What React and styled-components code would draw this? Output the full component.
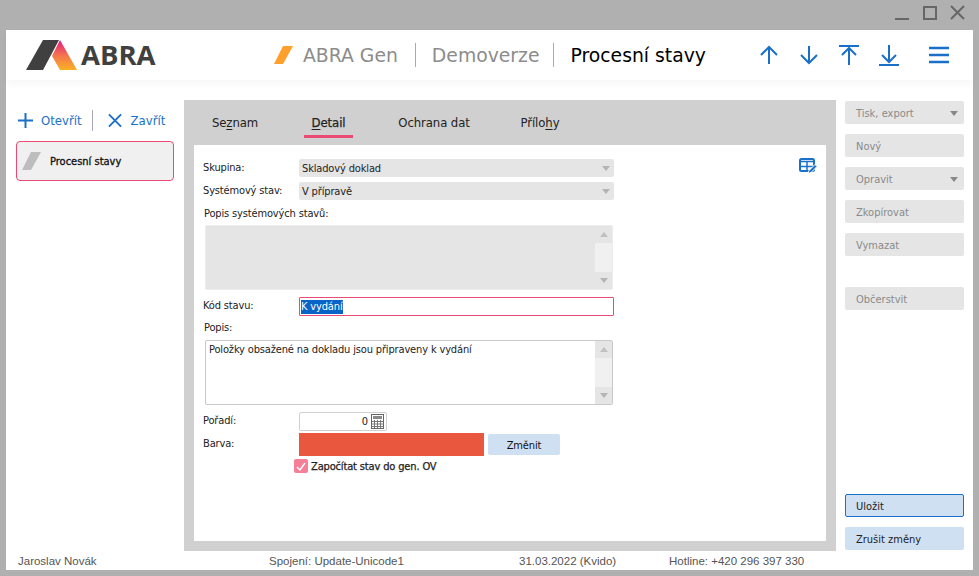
import React from "react";
import styled, { createGlobalStyle } from "styled-components";

const Global = createGlobalStyle`
  html, body { margin: 0; padding: 0; height: 100%; background: #b0b0b0; overflow: hidden; }
  body { font-family: "DejaVu Sans", "Liberation Sans", sans-serif; font-stretch: condensed; }
  * { box-sizing: border-box; }
`;

const Windowed = styled.div`
  width: 979px; height: 576px; background: #b0b0b0; display: flex; flex-direction: column;
`;
const TitleBar = styled.div`
  height: 30px; display: flex; justify-content: flex-end; align-items: flex-start; padding: 5px 12px 0 0; gap: 10px;
`;
const WinIcon = styled.svg`
  width: 18px; height: 18px; fill: none; stroke: #666; stroke-width: 2;
`;
const Shell = styled.div`
  width: 967px; height: 540px; margin-left: 6px; background: #fff; display: flex; flex-direction: column;
`;
const Header = styled.header`
  height: 50px; display: flex; align-items: center; flex: none; box-shadow: 0 4px 8px rgba(0,0,0,.035);
`;
const LogoBox = styled.div`
  display: flex; align-items: center; width: 268px; padding-left: 20px; gap: 3px;
`;
const LogoWord = styled.span`
  font: 700 27.5px/30px "Open Sans", sans-serif; font-stretch: normal; color: #404040;
`;
const Crumbs = styled.div`
  display: flex; align-items: center; flex: 1;
`;
const Crumb = styled.span`
  font-stretch: normal;
  font-size: 18.8px; line-height: 24px; height: 24px; color: ${p => p.$active ? "#000" : "#8c8c8c"};
  padding: 1px ${p => p.$pr || 0}px 0 ${p => p.$first ? 0 : 16}px;
  border-right: ${p => p.$active ? "none" : "1px solid #a8a8b8"};
`;
const Swash = styled.svg`
  width: 20px; height: 18px; margin-right: 9px; flex: none;
`;
const NavIcons = styled.div`
  display: flex; align-items: center; gap: 20px; padding-right: 24px;
`;
const NavIcon = styled.svg`
  width: 20px; height: 22px; fill: none; stroke: #1a6fc9; stroke-width: 2;
`;
const Burger = styled(NavIcon)`
  margin-left: 10px;
`;
const Body = styled.div`
  flex: 1; display: flex; padding-top: 20px; min-height: 0;
`;
const Side = styled.aside`
  width: 178px; flex: none; padding: 0 10px; display: flex; flex-direction: column;
`;
const SideTools = styled.div`
  display: flex; align-items: center; height: 41px; padding-left: 2px;
`;
const SideAction = styled.span`
  display: flex; align-items: center; gap: ${p => p.$gap}px; font-size: 13px; color: #1a6fc9;
`;
const SideSep = styled.span`
  width: 1px; height: 21px; background: #a8a8b8; margin: 0 15px 0 10px;
`;
const ActionIcon = styled.svg`
  width: ${p => p.$w || 15}px; height: 15px; fill: none; stroke: #1a6fc9; stroke-width: 2;
`;
const ModuleCard = styled.div`
  height: 40px; border: 1px solid #ea4b72; border-radius: 4px; background: #f0f0f0;
  display: flex; align-items: center; padding-left: 5px; gap: 8px;
  font-size: 11px; color: #111; -webkit-text-stroke: .3px #111;
`;
const Center = styled.main`
  width: 652px; flex: none; background: #d0d0d0; padding: 0 10px 10px; display: flex; flex-direction: column;
`;
const Tabs = styled.nav`
  height: 45px; flex: none; display: flex; padding-left: ${p => p.$pl}px;
`;
const Tab = styled.div`
  height: 38px; width: ${p => p.$w}px; margin-right: ${p => p.$gap}px; padding-top: 14px; text-align: center;
  font-size: 13px; line-height: 17px; color: #222; letter-spacing: -.1px;
  border-bottom: ${p => p.$active ? "3px solid #ea4b72" : "none"};
  -webkit-text-stroke: ${p => p.$active ? ".25px #222" : "0"};
  u { text-underline-offset: 2px; }
`;
const Panel = styled.section`
  flex: 1; background: #fff; padding: 14px 0 0 9px; position: relative; font-size: 11px; color: #222; letter-spacing: -.15px;
`;
const Row = styled.div`
  display: flex; align-items: center; height: ${p => p.$h || 18}px;
  margin-top: ${p => p.$mt || 0}px; margin-bottom: ${p => p.$mb || 0}px; width: 411px;
`;
const Label = styled.label`
  width: 96px; flex: none; line-height: 14px; position: relative; top: ${p => p.$level ? 0 : -1}px;
`;
const Combo = styled.div`
  flex: 1; height: 18px; background: #e5e5e5; border-radius: 2px; padding-left: 3px; display: flex;
  align-items: center; justify-content: space-between; padding-right: 4px;
`;
const Arrow = styled.span`
  width: 0; height: 0; border-left: 4.5px solid transparent; border-right: 4.5px solid transparent;
  border-top: 5px solid ${p => p.$dark ? "#888" : "#b4b4b4"};
`;
const SectionLabel = styled.div`
  height: 14px; line-height: 14px; margin: ${p => p.$mt}px 0 ${p => p.$mb}px 1px;
`;
const Memo = styled.div`
  width: 408px; height: 65px; margin-left: 2px; border-radius: 2px; display: flex; justify-content: space-between;
  background: ${p => p.$filled ? "#e5e5e5" : "#fff"};
  border: ${p => p.$filled ? "1px solid #ececec" : "1px solid #c8c8c8"};
  padding-left: 3px; line-height: 17px;
`;
const Scroll = styled.div`
  width: 17px; flex: none; background: #f0f0f0; display: flex; flex-direction: column; justify-content: space-between;
`;
const ScrollBtn = styled.div`
  height: 17px; background: #e5e5e5; display: flex; align-items: center; justify-content: center;
`;
const ScrollUp = styled.span`
  width: 0; height: 0; border-left: 4.5px solid transparent; border-right: 4.5px solid transparent;
  border-bottom: 5px solid #c0c0c0;
`;
const CodeInput = styled.div`
  flex: 1; height: 19px; border: 1px solid #ea4b72; border-radius: 1px; display: flex; align-items: center; padding-left: 1px;
  span { background: #0a64c8; color: #fff; line-height: 14px; }
`;
const NumberBox = styled.div`
  width: 88px; height: 19px; border: 1px solid #d0d0d0; border-radius: 2px; display: flex; align-items: center;
  justify-content: flex-end; gap: 3px; padding-right: 2px;
`;
const Swatch = styled.div`
  width: 185px; height: 23px; background: #e9573f; flex: none;
`;
const ChangeBtn = styled.div`
  width: 72px; height: 21px; margin-left: 4px; background: #cfe0f3; border-radius: 2px; text-align: center; line-height: 23px; color: #111;
`;
const CheckRow = styled.div`
  display: flex; align-items: center; gap: 3px; margin: 3px 0 0 91px; height: 14px; -webkit-text-stroke: .25px #222;
`;
const CheckBox = styled.span`
  width: 14px; height: 14px; background: #f47f97; border-radius: 2px; display: flex; align-items: center; justify-content: center;
`;
const EditIcon = styled.svg`
  position: absolute; top: 13px; right: 9px; width: 18px; height: 16px;
`;
const Actions = styled.aside`
  flex: 1; padding: 1px 9px 1px 9px; display: flex; flex-direction: column; gap: 10px;
`;
const Action = styled.div`
  height: 23px; border-radius: 2px; padding: 1px 6px 0 ${p => p.$focus ? "10px" : "11px"}; font-size: 11px; display: flex; align-items: center; justify-content: space-between;
  color: ${p => p.$primary ? "#222" : "#8a8a8a"};
  background: ${p => p.$primary ? "#cfe0f3" : "#e5e5e5"};
  border: ${p => p.$focus ? "1px solid #1a6fc9" : "none"};
  margin-top: ${p => p.$mt || 0}px;
`;
const Spacer = styled.span`
  flex: 1;
`;
const Status = styled.footer`
  height: 19px; flex: none; display: flex; font-family: "Liberation Sans", sans-serif; font-size: 11.5px; line-height: 20px; color: #555;
`;
const StatusCell = styled.span`
  width: ${p => p.$w}px; flex: none; padding-left: ${p => p.$pl || 0}px;
`;

export default function App() {
  return (
    <Windowed>
      <Global />
      <TitleBar>
        <WinIcon viewBox="0 0 18 18"><path d="M2 14h14" /></WinIcon>
        <WinIcon viewBox="0 0 18 18"><rect x="3" y="2" width="12" height="12" /></WinIcon>
        <WinIcon viewBox="0 0 18 18"><path d="M2 1l13 13M15 1L2 14" /></WinIcon>
      </TitleBar>
      <Shell>
        <Header>
          <LogoBox>
            <svg width="52" height="32" viewBox="0 0 52 32">
              <defs>
                <linearGradient id="lg" x1="0" y1="0" x2="0" y2="1">
                  <stop offset="0" stopColor="#e6197f" />
                  <stop offset=".55" stopColor="#f47a4a" />
                  <stop offset="1" stopColor="#f9b122" />
                </linearGradient>
              </defs>
              <polygon points="0,31 17,1 33,1 17,31" fill="#404040" />
              <polygon points="34,1 51,31 34,31 26,17" fill="url(#lg)" />
            </svg>
            <LogoWord>ABRA</LogoWord>
          </LogoBox>
          <Crumbs>
            <Swash viewBox="0 0 20 18"><polygon points="0,18 9,0 19,0 9,18" fill="#ffa02c" /></Swash>
            <Crumb $first $pr={17}>ABRA Gen</Crumb>
            <Crumb $pr={14}>Demoverze</Crumb>
            <Crumb $active>Procesní stavy</Crumb>
          </Crumbs>
          <NavIcons>
            <NavIcon viewBox="0 0 20 22"><path d="M10 20V3M2 11l8-8 8 8" /></NavIcon>
            <NavIcon viewBox="0 0 20 22"><path d="M10 2v17M2 11l8 8 8-8" /></NavIcon>
            <NavIcon viewBox="0 0 20 22"><path d="M0 2h20M10 21V4M3 11l7-7 7 7" /></NavIcon>
            <NavIcon viewBox="0 0 20 22"><path d="M0 21h20M10 1v17M3 11l7 7 7-7" /></NavIcon>
            <Burger viewBox="0 0 20 22"><path d="M0 4h21M0 11h21M0 18h21" strokeWidth="2.6" /></Burger>
          </NavIcons>
        </Header>
        <Body>
          <Side>
            <SideTools>
              <SideAction $gap={8}>
                <ActionIcon viewBox="0 0 15 15"><path d="M7.5 0v15M0 7.5h15" /></ActionIcon>
                Otevřít
              </SideAction>
              <SideSep />
              <SideAction $gap={9}>
                <ActionIcon $w={14} viewBox="0 0 15 15"><path d="M1 1l13 13M14 1L1 14" /></ActionIcon>
                Zavřít
              </SideAction>
            </SideTools>
            <ModuleCard>
              <svg width="20" height="18" viewBox="0 0 20 18"><polygon points="0,18 9,0 19,0 9,18" fill="#bdbdbd" /></svg>
              Procesní stavy
            </ModuleCard>
          </Side>
          <Center>
            <Tabs $pl={10}>
              <Tab $w={62} $gap={38}>Se<u>z</u>nam</Tab>
              <Tab $w={49} $gap={36} $active><u>D</u>etail</Tab>
              <Tab $w={90} $gap={32}>Ochrana dat</Tab>
              <Tab $w={58} $gap={0}>Přílo<u>h</u>y</Tab>
            </Tabs>
            <Panel>
              <EditIcon viewBox="0 0 18 16">
                <rect x="1" y="1" width="14" height="12" rx="1.5" fill="none" stroke="#1a6fc9" strokeWidth="2" />
                <path d="M1 3.5h14M8 4v9M1 8.5h14" stroke="#1a6fc9" strokeWidth="1.5" fill="none" />
                <path d="M9 15.5l1-3 6-6 2 2-6 6z" fill="#1a6fc9" stroke="#fff" />
              </EditIcon>
              <Row $mb={5}>
                <Label $level>Skupina:</Label>
                <Combo>Skladový doklad<Arrow /></Combo>
              </Row>
              <Row>
                <Label $level>Systémový stav:</Label>
                <Combo>V přípravě<Arrow /></Combo>
              </Row>
              <SectionLabel $mt={7} $mb={4}>Popis systémových stavů:</SectionLabel>
              <Memo $filled>
                <span />
                <Scroll>
                  <ScrollBtn><ScrollUp /></ScrollBtn>
                  <ScrollBtn><Arrow /></ScrollBtn>
                </Scroll>
              </Memo>
              <Row $h={19} $mt={7}>
                <Label>Kód stavu:</Label>
                <CodeInput><span>K vydání</span></CodeInput>
              </Row>
              <SectionLabel $mt={5} $mb={5}>Popis:</SectionLabel>
              <Memo>
                <span>Položky obsažené na dokladu jsou připraveny k vydání</span>
                <Scroll>
                  <ScrollBtn><ScrollUp /></ScrollBtn>
                  <ScrollBtn><Arrow /></ScrollBtn>
                </Scroll>
              </Memo>
              <Row $h={19} $mt={7}>
                <Label>Pořadí:</Label>
                <NumberBox>
                  0
                  <svg width="13" height="15" viewBox="0 0 13 15">
                    <rect x=".5" y=".5" width="12" height="14" fill="none" stroke="#666" />
                    <rect x="2" y="2" width="9" height="3" fill="#888" />
                    <path d="M1 7.5h11M1 10h11M1 12.5h11M3.5 6v8M6.5 6v8M9.5 6v8" stroke="#777" />
                  </svg>
                </NumberBox>
              </Row>
              <Row $h={23} $mt={2}>
                <Label>Barva:</Label>
                <Swatch />
                <ChangeBtn>Změnit</ChangeBtn>
              </Row>
              <CheckRow>
                <CheckBox>
                  <svg width="10" height="9" viewBox="0 0 10 9"><path d="M1 5l3 3 5-7" fill="none" stroke="#fff" strokeWidth="1.4" /></svg>
                </CheckBox>
                Započítat stav do gen. OV
              </CheckRow>
            </Panel>
          </Center>
          <Actions>
            <Action>Tisk, export<Arrow $dark /></Action>
            <Action>Nový</Action>
            <Action>Opravit<Arrow $dark /></Action>
            <Action>Zkopírovat</Action>
            <Action>Vymazat</Action>
            <Action $mt={21}>Občerstvit</Action>
            <Spacer />
            <Action $primary $focus>Uložit</Action>
            <Action $primary>Zrušit změny</Action>
          </Actions>
        </Body>
        <Status>
          <StatusCell $w={263} $pl={12}>Jaroslav Novák</StatusCell>
          <StatusCell $w={250}>Spojení: Update-Unicode1</StatusCell>
          <StatusCell $w={150}>31.03.2022 (Kvido)</StatusCell>
          <StatusCell $w={200}>Hotline: +420 296 397 330</StatusCell>
        </Status>
      </Shell>
    </Windowed>
  );
}
